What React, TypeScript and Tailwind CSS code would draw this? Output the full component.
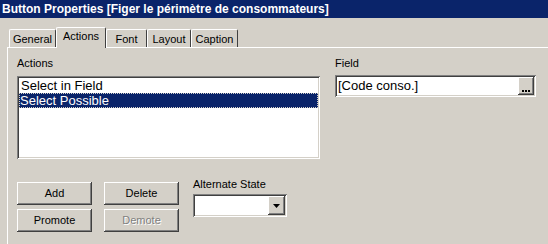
import React from "react";

const raised =
  "shadow-[inset_-1px_-1px_#404040,inset_1px_1px_#ffffff,inset_-2px_-2px_#808080,inset_2px_2px_#d4d0c8]";
const sunken =
  "shadow-[inset_1px_1px_#808080,inset_-1px_-1px_#ffffff,inset_2px_2px_#404040,inset_-2px_-2px_#d4d0c8]";

function Tab({ label, w, selected }: { label: string; w: number; selected?: boolean }) {
  return (
    <div
      className={
        "flex items-center justify-center border-l border-t border-r border-l-white border-t-white border-r-[#404040] rounded-t-[2px] " +
        (selected ? "h-[21px] -mx-[2px] relative z-10 bg-[#d4d0c8] pb-[3px] -mb-px" : "h-[18px] pt-px")
      }
      style={{ width: w }}
    >
      <span>{label}</span>
    </div>
  );
}

function Button({ label, disabled }: { label: string; disabled?: boolean }) {
  return (
    <div
      className={
        "w-[75px] h-[23px] flex items-center justify-center bg-[#d4d0c8] " +
        raised +
        (disabled ? " text-[#808080] [text-shadow:1px_1px_#ffffff]" : "")
      }
    >
      {label}
    </div>
  );
}

export default function App() {
  return (
    <div
      className="w-[548px] h-[244px] bg-[#d4d0c8] overflow-hidden text-[11px] text-black"
      style={{ fontFamily: '"Liberation Sans", Arial, sans-serif' }}
    >
      <div className="h-[18px] bg-[#0a246a] text-white font-bold text-[12px] pl-[2px] flex items-center leading-none">
        Button Properties [Figer le périmètre de consommateurs]
      </div>
      <div className="pl-[9px] pt-[9px]">
        <div className="flex items-end h-[20px] pl-0">
          <Tab label="General" w={47} />
          <div className="w-[2px]" />
          <Tab label="Actions" w={50} selected />
          <div className="w-[2px]" />
          <Tab label="Font" w={41} />
          <Tab label="Layout" w={44} />
          <Tab label="Caption" w={47} />
        </div>
        <div className="-ml-[2px] border-l border-t border-white h-[200px] pl-[9px] pt-[8px]">
          <div className="flex">
            <div className="w-[303px]">
              <div className="h-[13px] leading-[13px] mt-[1px]">Actions</div>
              <div className={"mt-[6px] h-[83px] bg-white p-[2px] text-[13px] " + sunken}>
                <div className="h-[15px] leading-[15px] pl-[2px]">Select in Field</div>
                <div className="h-[15px] leading-[15px] pl-[1px] bg-[#0a246a] text-white outline outline-1 outline-dotted outline-[#d4d0c8] -outline-offset-1">
                  Select Possible
                </div>
              </div>
            </div>
            <div className="ml-[15px] w-[201px]">
              <div className="h-[13px] leading-[13px] mt-[1px]">Field</div>
              <div className={"mt-[5px] h-[22px] bg-white flex items-center p-[2px] " + sunken}>
                <div className="flex-1 pl-[1px] text-[13px]">[Code conso.]</div>
                <div className={"w-[16px] h-[18px] bg-[#d4d0c8] flex items-end justify-center pb-[3px] " + raised}>
                  <div className="flex gap-[1px]">
                    <div className="w-[2px] h-[2px] bg-black" />
                    <div className="w-[2px] h-[2px] bg-black" />
                    <div className="w-[2px] h-[2px] bg-black" />
                  </div>
                </div>
              </div>
            </div>
          </div>
          <div className="flex mt-[19px]">
            <div className="grid grid-cols-[75px_75px] gap-x-[12px] gap-y-[4px] mt-[4px]">
              <Button label="Add" />
              <Button label="Delete" />
              <Button label="Promote" />
              <Button label="Demote" disabled />
            </div>
            <div className="ml-[14px]">
              <div className="h-[13px] leading-[13px]">Alternate State</div>
              <div className={"mt-[3px] w-[94px] h-[23px] bg-white flex items-center justify-end p-[2px] " + sunken}>
                <div className={"w-[17px] h-[19px] bg-[#d4d0c8] flex items-center justify-center " + raised}>
                  <svg width="7" height="4" viewBox="0 0 7 4">
                    <path d="M0 0H7L3.5 4Z" fill="#000" />
                  </svg>
                </div>
              </div>
            </div>
          </div>
        </div>
      </div>
    </div>
  );
}
